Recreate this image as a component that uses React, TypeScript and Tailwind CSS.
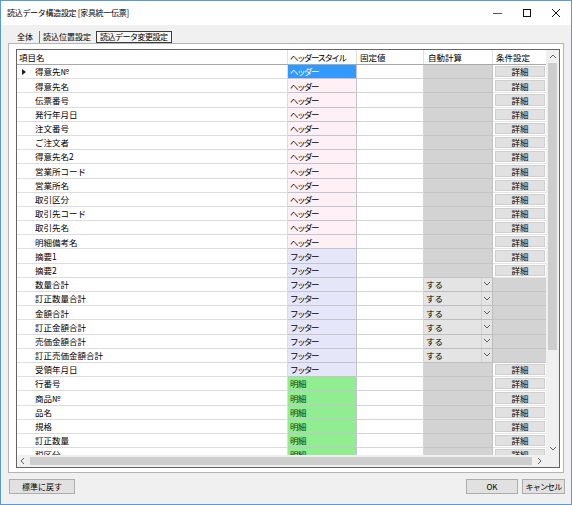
import type { ReactNode } from "react";

type StyleKind = "header" | "footer" | "detail";
type Action = "button" | "combo";

interface FieldRow {
  name: string;
  style: StyleKind;
  action: Action;
}

const rows: FieldRow[] = [
  { name: "得意先№", style: "header", action: "button" },
  { name: "得意先名", style: "header", action: "button" },
  { name: "伝票番号", style: "header", action: "button" },
  { name: "発行年月日", style: "header", action: "button" },
  { name: "注文番号", style: "header", action: "button" },
  { name: "ご注文者", style: "header", action: "button" },
  { name: "得意先名2", style: "header", action: "button" },
  { name: "営業所コード", style: "header", action: "button" },
  { name: "営業所名", style: "header", action: "button" },
  { name: "取引区分", style: "header", action: "button" },
  { name: "取引先コード", style: "header", action: "button" },
  { name: "取引先名", style: "header", action: "button" },
  { name: "明細備考名", style: "header", action: "button" },
  { name: "摘要1", style: "footer", action: "button" },
  { name: "摘要2", style: "footer", action: "button" },
  { name: "数量合計", style: "footer", action: "combo" },
  { name: "訂正数量合計", style: "footer", action: "combo" },
  { name: "金額合計", style: "footer", action: "combo" },
  { name: "訂正金額合計", style: "footer", action: "combo" },
  { name: "売価金額合計", style: "footer", action: "combo" },
  { name: "訂正売価金額合計", style: "footer", action: "combo" },
  { name: "受領年月日", style: "footer", action: "button" },
  { name: "行番号", style: "detail", action: "button" },
  { name: "商品№", style: "detail", action: "button" },
  { name: "品名", style: "detail", action: "button" },
  { name: "規格", style: "detail", action: "button" },
  { name: "訂正数量", style: "detail", action: "button" },
  { name: "税区分", style: "detail", action: "button" },
];

const styleLabel: Record<StyleKind, string> = {
  header: "ヘッダー",
  footer: "フッター",
  detail: "明細",
};

const styleCell: Record<StyleKind, string> = {
  header: "bg-[#fff0f5] text-black tracking-[-1.5px]",
  footer: "bg-[#e6e6fa] text-black tracking-[-1.5px]",
  detail: "bg-[#90ee90] text-[#0b3d0b] tracking-[-0.5px]",
};

const Chevron = ({ dir }: { dir: "up" | "down" | "left" | "right" }) => {
  const points = {
    up: "1,5 4,2 7,5",
    down: "1,2 4,5 7,2",
    left: "5,1 2,4 5,7",
    right: "2,1 5,4 2,7",
  }[dir];
  return (
    <svg width="8" height="8" viewBox="0 0 8 8">
      <polyline points={points} fill="none" stroke="#606060" strokeWidth="1" />
    </svg>
  );
};

const Button = ({ width, children }: { width: string; children: ReactNode }) => (
  <div
    className={`${width} h-[15px] bg-[#e1e1e1] border border-[#adadad] flex items-center justify-center text-[8px] whitespace-nowrap`}
  >
    {children}
  </div>
);

const GridRow = ({ row, selected }: { row: FieldRow; selected: boolean }) => (
  <div className="grid grid-cols-[15px_256px_69px_67px_69px_53px] h-[14.2px] shrink-0">
    <div className="border-b border-[#e0e0e0] bg-white flex items-center justify-center pr-[1px]">
      {selected && (
        <svg width="4" height="6" viewBox="0 0 4 6">
          <polygon points="0,0 4,3 0,6" fill="#202020" />
        </svg>
      )}
    </div>
    <div className="border-b border-r border-[#dcdcdc] bg-white flex items-center pl-[3px] whitespace-nowrap">
      {row.name}
    </div>
    <div
      className={`border-b border-r border-[#c4c4cc] flex items-center pl-[2px] whitespace-nowrap ${
        selected ? "bg-[#3399ff] text-white tracking-[-1.5px]" : styleCell[row.style]
      }`}
    >
      {styleLabel[row.style]}
    </div>
    <div className="border-b border-r border-[#d4d4d4] bg-white" />
    {row.action === "combo" ? (
      <div className="border-b border-r border-[#bdbdbd] bg-[#e4e4e4] flex items-center">
        <span className="flex-1 pl-[2px]">する</span>
        <span className="w-[11px] h-full flex items-center justify-center border-l border-[#d2d2d2]">
          <Chevron dir="down" />
        </span>
      </div>
    ) : (
      <div className="border-b border-r border-[#c4c4c4] bg-[#d3d3d3]" />
    )}
    {row.action === "combo" ? (
      <div className="border-b border-[#c4c4c4] bg-[#d3d3d3]" />
    ) : (
      <div className="border-b border-[#e4e4e4] bg-white pl-[2px] pr-[1px] py-[1px] flex">
        <div className="flex-1 bg-[#e1e1e1] border border-[#cfcfcf] flex items-center justify-center">
          詳細
        </div>
      </div>
    )}
  </div>
);

export default function App() {
  return (
    <div className="w-[572px] h-[505px] border border-[#5b9bd5] bg-[#f0f0f0] flex flex-col text-black font-[family-name:'Noto_Sans_CJK_JP','Liberation_Sans',sans-serif] leading-none">
      {/* title bar */}
      <div className="h-[24px] shrink-0 bg-white flex items-center justify-between">
        <span className="pl-[6px] text-[8px] tracking-[-0.3px]">読込データ構造設定 [家具統一伝票]</span>
        <div className="flex h-full">
          <div className="w-[29px] flex items-center justify-center">
            <div className="w-[9px] h-px bg-[#555]" />
          </div>
          <div className="w-[29px] flex items-center justify-center">
            <div className="w-[8px] h-[8px] border border-[#111]" />
          </div>
          <div className="w-[30px] flex items-center justify-center">
            <svg width="10" height="10" viewBox="0 0 10 10">
              <path d="M1 1L9 9M9 1L1 9" stroke="#111" strokeWidth="1" />
            </svg>
          </div>
        </div>
      </div>

      {/* tabs */}
      <div className="h-[18px] shrink-0 flex items-end pl-[16px] text-[8px]">
        <span className="h-[12px] flex items-center">全体</span>
        <div className="w-px h-[12px] bg-[#7a7a7a] ml-[6px]" />
        <span className="h-[12px] flex items-center ml-[3px]">読込位置設定</span>
        <span className="h-[12px] flex items-center ml-[5px] px-[3px] border border-[#3c3c3c] bg-[#f7f7f7] tracking-[-0.5px]">
          読込データ変更設定
        </span>
      </div>

      {/* tab page */}
      <div className="ml-[7px] w-[556px] h-[430px] shrink-0 border border-[#b4b4b4] bg-white pt-[5px] pl-[7px] pr-[3px] pb-[4px]">
        <div className="w-[544px] h-[419px] border border-[#646464] flex flex-col text-[8.5px]">
          <div className="flex h-[405px]">
            <div className="w-[529px] flex flex-col">
              <div className="grid grid-cols-[271px_69px_67px_69px_53px] h-[15px] shrink-0 bg-white border-b border-[#a8a8a8] whitespace-nowrap">
                <div className="flex items-center pl-[2px] border-r border-[#e0e0e0]">項目名</div>
                <div className="flex items-center pl-[2px] border-r border-[#e0e0e0] overflow-hidden tracking-[-1.5px]">
                  ヘッダースタイル
                </div>
                <div className="flex items-center pl-[3px] border-r border-[#e0e0e0]">固定値</div>
                <div className="flex items-center pl-[4px] border-r border-[#e0e0e0]">自動計算</div>
                <div className="flex items-center pl-[3px]">条件設定</div>
              </div>
              <div className="h-[390px] overflow-hidden flex flex-col">
                {rows.map((row, i) => (
                  <GridRow key={row.name} row={row} selected={i === 0} />
                ))}
              </div>
            </div>
            {/* vertical scrollbar */}
            <div className="w-[13px] bg-[#f0f0f0] flex flex-col">
              <div className="h-[13px] flex items-center justify-center">
                <Chevron dir="up" />
              </div>
              <div className="h-[287px] mx-[2px] bg-[#cdcdcd]" />
              <div className="flex-1" />
              <div className="h-[13px] flex items-center justify-center">
                <Chevron dir="down" />
              </div>
            </div>
          </div>
          {/* horizontal scrollbar */}
          <div className="flex h-[12px]">
            <div className="w-[529px] bg-[#f0f0f0] flex items-center">
              <div className="w-[12px] flex items-center justify-center">
                <Chevron dir="left" />
              </div>
              <div className="flex-1 h-[8px] mx-[1px] bg-[#cdcdcd]" />
              <div className="w-[13px] flex items-center justify-center">
                <Chevron dir="right" />
              </div>
            </div>
            <div className="w-[13px] bg-[#f0f0f0]" />
          </div>
        </div>
      </div>

      {/* buttons */}
      <div className="flex-1 flex items-start justify-between pt-[6px] pl-[8px] pr-[6px]">
        <Button width="w-[66px]">標準に戻す</Button>
        <div className="flex gap-[4px]">
          <Button width="w-[52px]">OK</Button>
          <Button width="w-[43px] tracking-[-0.8px]">キャンセル</Button>
        </div>
      </div>
    </div>
  );
}
